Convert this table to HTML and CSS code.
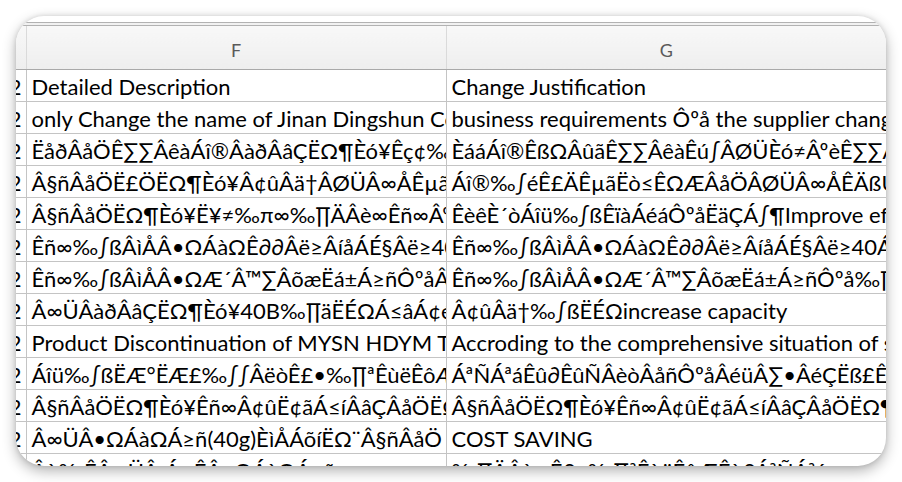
FILE: index.html
```html
<!DOCTYPE html>
<html lang="en">
<head>
    <meta charset="UTF-8">
    <title>Sheet</title>
    <link rel="stylesheet" href="styles.css">
</head>
<body>
    <div class="sheet">
        <div class="top-edge"></div>
        <table class="grid">
            <colgroup>
                <col class="col-num">
                <col class="col-f">
                <col class="col-g">
            </colgroup>
            <thead>
                <tr>
                    <th class="num"></th>
                    <th>F</th>
                    <th>G</th>
                </tr>
            </thead>
            <tbody>
                <tr><td class="num">2</td><td>Detailed Description</td><td>Change Justification</td></tr>
                <tr><td class="num">2</td><td>only Change the name of Jinan Dingshun Co., Ltd.</td><td>business requirements Ôºå the supplier changed its name</td></tr>
                <tr><td class="num">2</td><td>ËåðÂåÖÊ∑∑ÂêàÁî®ÂàðÂâÇËΩ¶Èó¥Êç¢‰∏Ä</td><td>ÈááÁî®ÊßΩÂûãÊ∑∑ÂêàÊú∫ÂØÜÈó≠ÂºèÊ∑∑Âêà</td></tr>
                <tr><td class="num">2</td><td>Â§ñÂåÖË£ÖËΩ¶Èó¥Â¢ûÂä†ÂØÜÂ∞ÅÊµãËØï</td><td>Áî®‰∫éÊ£ÄÊµãËò≤ÊΩÆÂåÖÂØÜÂ∞ÅÊÄßUsed to</td></tr>
                <tr><td class="num">2</td><td>Â§ñÂåÖËΩ¶Èó¥Ë¥≠‰π∞‰∏ÄÂè∞Êñ∞ÂºèÂ∞ÅÂè£Êú∫</td><td>ÊèêÈ´òÁîü‰∫ßÊïàÁéáÔºåËäÇÁ∫¶Improve efficiency</td></tr>
                <tr><td class="num">2</td><td>Êñ∞‰∫ßÂìÅÂ•ΩÁàΩÊ∂∂Âë≥ÂíåÁÉ§Âë≥40Á≤íÊ∑∑Âêà</td><td>Êñ∞‰∫ßÂìÅÂ•ΩÁàΩÊ∂∂Âë≥ÂíåÁÉ§Âë≥40Á≤íÊ∑∑Âêà</td></tr>
                <tr><td class="num">2</td><td>Êñ∞‰∫ßÂìÅÂ•ΩÆ´Â™∑ÂõæËá±Á≥ñÔºåÂ∞ÜÂéü</td><td>Êñ∞‰∫ßÂìÅÂ•ΩÆ´Â™∑ÂõæËá±Á≥ñÔºå‰∏∫‰∫Ü</td></tr>
                <tr><td class="num">2</td><td>Â∞ÜÂàðÂâÇËΩ¶Èó¥40B‰∏äËÉΩÁ≤âÁ¢éÊú∫</td><td>Â¢ûÂä†‰∫ßËÉΩincrease capacity</td></tr>
                <tr><td class="num">2</td><td>Product Discontinuation of MYSN HDYM TB</td><td>Accroding to the comprehensive situation of sales</td></tr>
                <tr><td class="num">2</td><td>Áîü‰∫ßËÆ°ËÆ£‰∫∫ÂëòÊ£•‰∏ªÊùëÊôÆÊù£</td><td>ÁªÑÁªáÊû∂ÊûÑÂèòÂåñÔºåÂéüÂ∑•ÂéÇËß£Êï£Ôºå</td></tr>
                <tr><td class="num">2</td><td>Â§ñÂåÖËΩ¶Èó¥Êñ∞Â¢ûË¢ãÁ≤íÂâÇÂåÖËΩ¶</td><td>Â§ñÂåÖËΩ¶Èó¥Êñ∞Â¢ûË¢ãÁ≤íÂâÇÂåÖËΩ¶</td></tr>
                <tr><td class="num">2</td><td>Â∞ÜÂ•ΩÁàΩÁ≥ñ(40g)ÈìÅÁõíËΩ¨Â§ñÂåÖ</td><td>COST SAVING</td></tr>
                <tr><td class="num">2</td><td>Âù‰ÊÂ∞ÜÂ‹ÁµÊÂ•ΩÁàΩÁ≥ñ</td><td>‰∏ÄÂè∞Ê£•‰∏ªÊùëÊôÆÊù£ÁªÑÁªá</td></tr>
            </tbody>
        </table>
    </div>
</body>
</html>
```

FILE: styles.css
```css
* {
    margin: 0;
    padding: 0;
    box-sizing: border-box;
}

body {
    background: #ffffff;
    font-family: Lato, "Noto Sans", "DejaVu Sans", sans-serif;
}

.sheet {
    margin: 16px;
    width: 870px;
    height: 450px;
    background: #ffffff;
    border-radius: 28px;
    overflow: hidden;
    padding-top: 6px;
    box-shadow: 0 5px 14px rgba(0, 0, 0, 0.30), 0 0 5px rgba(0, 0, 0, 0.12);
}

.top-edge {
    height: 4px;
    background: #f1f1f1;
    border-top: 1px solid #b2b2b2;
    border-bottom: 1px solid #b2b2b2;
}

.grid {
    table-layout: fixed;
    border-collapse: collapse;
    width: 870px;
}

.col-num {
    width: 10px;
}

.col-f {
    width: 420px;
}

.col-g {
    width: 440px;
}

.grid th {
    height: 43px;
    background: linear-gradient(#f8f8f8, #eeeeee);
    border-bottom: 1px solid #a9a9a9;
    border-left: 1px solid #dadada;
    color: #5a5a5a;
    font-weight: 400;
    font-size: 18px;
    padding-top: 6px;
    text-align: center;
}

.grid th.num {
    border-left: none;
}

.grid td {
    height: 32px;
    padding: 0 4px 2px 5px;
    border-bottom: 1px solid #c4c4c4;
    border-left: 1px solid #c4c4c4;
    font-size: 22px;
    line-height: 24px;
    color: #000000;
    white-space: nowrap;
    overflow: hidden;
    text-overflow: clip;
    vertical-align: bottom;
}

.grid td.num {
    border-left: none;
    padding: 0 4px 2px 0;
    direction: rtl;
    text-align: right;
}
```
